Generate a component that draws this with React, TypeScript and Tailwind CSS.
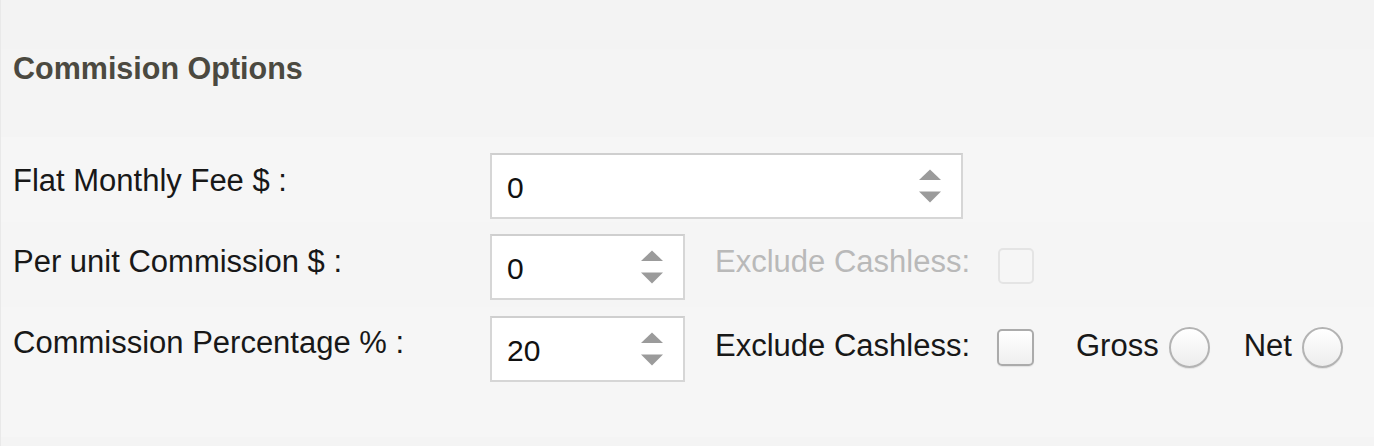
import React from "react";

function Spinner() {
  return (
    <svg width="24" height="34" viewBox="0 0 24 34" className="shrink-0">
      <polygon points="1,11 12,0.5 23,11" fill="#9b9b9b" />
      <polygon points="1,22.5 23,22.5 12,33.5" fill="#9b9b9b" />
    </svg>
  );
}

function NumberBox({ value, width }: { value: string; width: string }) {
  return (
    <div
      className={`${width} h-[66px] shrink-0 bg-white border-2 border-[#d6d6d6] border-t-[#cfcfcf] flex items-center pl-[15px] pr-[19px]`}
    >
      <span className="flex-1 text-[30px] leading-[34px] text-[#111] pt-[4px]">{value}</span>
      <Spinner />
    </div>
  );
}

function CheckBox({ disabled }: { disabled?: boolean }) {
  return (
    <div
      className={
        disabled
          ? "w-[36px] h-[36px] shrink-0 rounded-[5px] border-2 border-[#e4e4e4] bg-[#f6f6f6]"
          : "w-[37px] h-[37px] shrink-0 rounded-[5px] border-2 border-[#ababab] bg-gradient-to-b from-white to-[#efefef] shadow-[0_1px_1px_rgba(0,0,0,0.08)]"
      }
    />
  );
}

function Radio() {
  return (
    <div className="w-[41px] h-[41px] shrink-0 rounded-full border-2 border-[#b3b3b3] bg-gradient-to-b from-white to-[#ededed] shadow-[0_1px_1px_rgba(0,0,0,0.08)]" />
  );
}

function Label({ children, className = "" }: { children: React.ReactNode; className?: string }) {
  return (
    <div className={`w-[489px] shrink-0 pl-[12px] text-[31px] leading-[34px] text-[#181818] whitespace-nowrap ${className}`}>
      {children}
    </div>
  );
}

export default function App() {
  return (
    <div className="font-['Liberation_Sans',Arimo,Arial,sans-serif] w-[1374px] h-[446px] overflow-hidden border-l border-[#e9e9e9] bg-[#f5f5f5]">
      <div className="h-[49px] bg-[#f3f3f3]" />

      <div className="h-[88px] bg-[#f4f4f4] pt-[2px] pl-[12px]">
        <h2 className="text-[30.5px] leading-[34px] font-bold text-[#4b4940]">Commision Options</h2>
      </div>

      {/* Flat monthly fee */}
      <div className="h-[85px] bg-[#f6f6f6] pt-[16px]">
        <div className="h-[66px] flex items-center">
          <Label className="mb-[10px]">Flat Monthly Fee $ :</Label>
          <NumberBox value="0" width="w-[473px]" />
        </div>
      </div>

      {/* Per unit commission */}
      <div className="h-[85px] bg-[#f5f5f5] pt-[12px]">
        <div className="h-[66px] flex items-center">
          <Label className="mb-[10px]">Per unit Commission $ :</Label>
          <NumberBox value="0" width="w-[195px]" />
          <div className="ml-[30px] w-[283px] shrink-0 text-[31px] leading-[34px] text-[#b9b9b9] whitespace-nowrap mb-[10px]">
            Exclude Cashless:
          </div>
          <div className="mb-[2px]">
            <CheckBox disabled />
          </div>
        </div>
      </div>

      {/* Commission percentage */}
      <div className="h-[130px] bg-[#f6f6f6] pt-[9px]">
        <div className="h-[66px] flex items-center">
          <Label className="mb-[12px]">Commission Percentage % :</Label>
          <NumberBox value="20" width="w-[195px]" />
          <div className="ml-[30px] w-[282px] shrink-0 text-[31px] leading-[34px] text-[#181818] whitespace-nowrap mb-[6px]">
            Exclude Cashless:
          </div>
          <div className="mb-[4px]">
            <CheckBox />
          </div>
          <span className="ml-[42px] text-[31px] leading-[34px] text-[#181818] mb-[6px]">Gross</span>
          <div className="ml-[10px] mb-[4px]">
            <Radio />
          </div>
          <span className="ml-[34px] text-[31px] leading-[34px] text-[#181818] mb-[6px]">Net</span>
          <div className="ml-[10px] mb-[4px]">
            <Radio />
          </div>
        </div>
      </div>

      <div className="h-[9px] bg-[#f4f4f4]" />
    </div>
  );
}
